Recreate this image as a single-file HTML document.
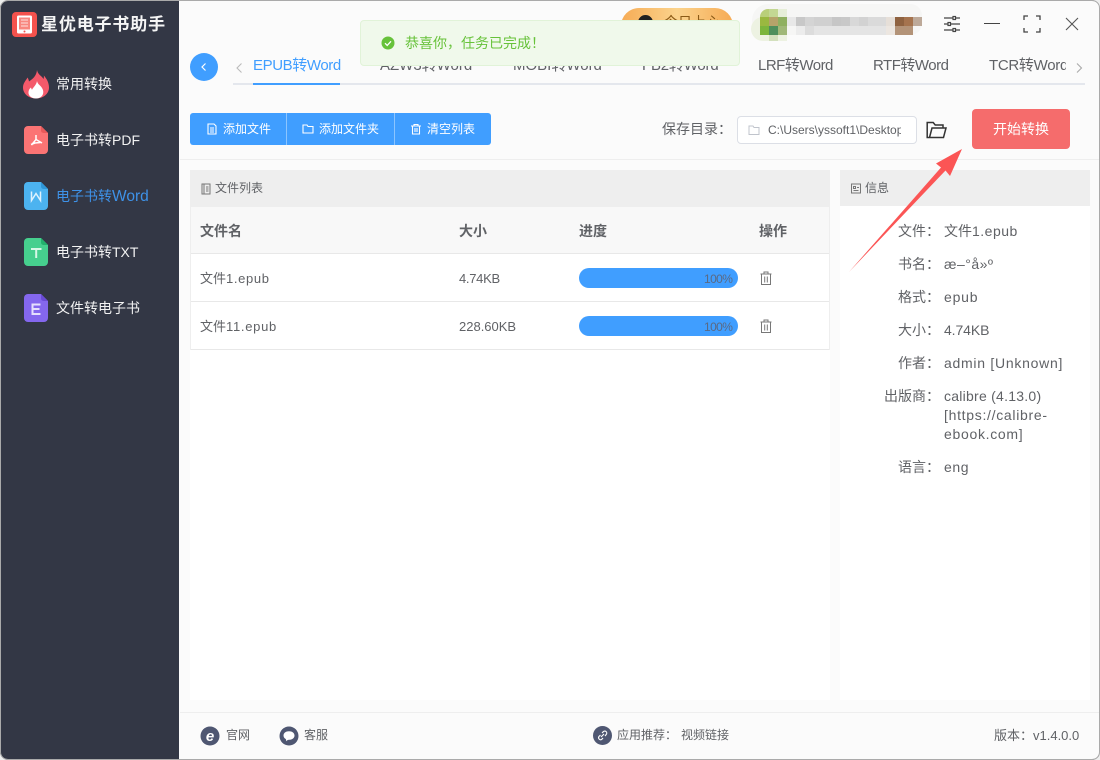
<!DOCTYPE html>
<html lang="zh-CN">
<head>
<meta charset="utf-8">
<title>星优电子书助手</title>
<style>
*{box-sizing:border-box;margin:0;padding:0}
html,body{width:1100px;height:760px;overflow:hidden;background:#eeeeee}
body{position:relative;font-family:"Liberation Sans","Noto Sans CJK SC",sans-serif;color:#606266}
#win{position:absolute;left:0;top:0;width:1100px;height:760px;background:#fbfbfb;border-radius:8px;overflow:hidden;border-top:1px solid #b5b5b5;border-bottom:1px solid #8a8a8a}
#edge{position:absolute;left:0;top:0;width:1100px;height:760px;border:1px solid #aaaaaa;border-radius:8px}
.a{position:absolute;white-space:nowrap}
#side{position:absolute;left:0;top:-1px;width:179px;height:762px;background:#333745}
.nav{position:absolute;left:56px;font-size:14px;line-height:20px;color:#f2f2f2;white-space:nowrap}
.ic{position:absolute;left:24px;width:24px;height:28px}
.tab{position:absolute;top:55px;font-size:15px;line-height:20px;color:#606266;white-space:nowrap}
.btxt{position:absolute;top:120px;font-size:12px;line-height:17px;color:#fff}
.th{position:absolute;top:221px;font-size:14px;line-height:18px;font-weight:bold;color:#606266}
.td{position:absolute;font-size:13px;line-height:18px;color:#606266;white-space:nowrap}
.lb{position:absolute;width:60px;text-align:right;left:880px;font-size:14px;line-height:18px;color:#606266;white-space:nowrap}
.vl{position:absolute;left:944px;font-size:14px;line-height:18px;color:#606266;white-space:nowrap}
.ft{position:absolute;top:726px;font-size:12px;line-height:17px;color:#606266;white-space:nowrap}
.m{position:absolute;width:9px;height:9px}
.pct{position:absolute;left:704px;font-size:12px;line-height:16px;color:#5a6a85;letter-spacing:-.6px}
</style>
</head>
<body>
<div id="win">
  <!-- sidebar -->
  <div id="side"></div>
  <svg class="a" style="left:12px;top:11px" width="25" height="26" viewBox="0 0 25 26">
    <rect width="25" height="25" rx="4" fill="#f4524d"/>
    <rect x="5" y="3.500" width="15" height="18" rx="1.500" fill="#fff"/>
    <rect x="7" y="5.500" width="11" height="12" fill="#f8877f"/>
    <path d="M9 8h7M9 11h7M9 14h7" stroke="#fbd0cc" stroke-width="1.200"/>
    <circle cx="12.500" cy="19.500" r="1" fill="#f4524d"/>
  </svg>
  <div class="a" style="left:41px;top:13px;font-size:17px;line-height:22px;font-weight:bold;color:#f5f5f5;letter-spacing:.85px">星优电子书助手</div>

  <svg class="a" style="left:23px;top:69px" width="26" height="29" viewBox="0 0 26 29">
    <path d="M14 0c1 5 5 6 6.500 9 .5-1.500.5-2.500.3-3.500C23.500 8.500 26 12.500 26 17.500 26 24 20 28.500 13 28.500S0 24 0 17.500C0 13 3 10.500 4.500 7.500c.8 1.500 1.300 2.500 1.500 4C9.500 9 13.500 6 14 0z" fill="#f4596a"/>
    <path d="M14 11c.5 3 3 4 4.700 6.500 1.800 2.700 1.800 4.700 1.300 6.500-1 3-4 4.500-7 4.500s-6.500-1.500-7.300-4.500c-.6-2.500.3-5 2.300-6.500.3 1 .5 1.700 1 2.200C10 17.500 13.500 15 14 11z" fill="#fff"/>
  </svg>
  <div class="nav" style="top:73px">常用转换</div>

  <svg class="ic" style="top:125px" viewBox="0 0 24 28"><path d="M4 0h13l7 7v17a4 4 0 0 1-4 4H4a4 4 0 0 1-4-4V4a4 4 0 0 1 4-4z" fill="#fb7474"/><path d="M17 0l7 7h-4.500a2.500 2.500 0 0 1-2.500-2.500z" fill="#e85a5a"/><path d="M12 9v4.500M12 13.500L7.500 19M12 13.500l6 3.500M7 18.500l4-1.500 5.500-.5" stroke="#fff" stroke-width="1.500" fill="none"/></svg>
  <div class="nav" style="top:129px">电子书转PDF</div>

  <svg class="ic" style="top:181px" viewBox="0 0 24 28"><path d="M4 0h13l7 7v17a4 4 0 0 1-4 4H4a4 4 0 0 1-4-4V4a4 4 0 0 1 4-4z" fill="#4cb3f0"/><path d="M17 0l7 7h-4.500a2.500 2.500 0 0 1-2.500-2.500z" fill="#2f97d8"/><path d="M7.500 9.500v9l4.500-7 4.500 7v-9" stroke="#dff2fd" stroke-width="1.500" fill="none"/></svg>
  <div class="nav" style="top:185px;color:#3e92e8">电子书转<span style="font-size:15.5px">Word</span></div>

  <svg class="ic" style="top:237px" viewBox="0 0 24 28"><path d="M4 0h13l7 7v17a4 4 0 0 1-4 4H4a4 4 0 0 1-4-4V4a4 4 0 0 1 4-4z" fill="#46cf8e"/><path d="M17 0l7 7h-4.500a2.500 2.500 0 0 1-2.500-2.500z" fill="#22b06c"/><path d="M7 11h10.500M12.200 11v9" stroke="#d8f7e7" stroke-width="2" fill="none"/></svg>
  <div class="nav" style="top:241px">电子书转TXT</div>

  <svg class="ic" style="top:293px" viewBox="0 0 24 28"><path d="M4 0h13l7 7v17a4 4 0 0 1-4 4H4a4 4 0 0 1-4-4V4a4 4 0 0 1 4-4z" fill="#8467ee"/><path d="M17 0l7 7h-4.500a2.500 2.500 0 0 1-2.500-2.500z" fill="#6a4bd6"/><path d="M16.500 10.500H8.500v9.500h8M8.500 15h7" stroke="#e6e0fd" stroke-width="2" fill="none"/></svg>
  <div class="nav" style="top:297px">文件转电子书</div>

  <!-- top promo + mosaic -->
  <div class="a" style="left:621px;top:7px;width:112px;height:40px;border-radius:18px;background:linear-gradient(90deg,#f6ab55,#fbd38c 50%,#f6ab55)"></div>
  <div class="a" style="left:638px;top:14px;width:15px;height:15px;border-radius:50%;background:#222"></div>
  <div class="a" style="left:664px;top:12px;font-size:14px;line-height:18px;color:#8a5a16">今日上心</div>

  <div class="a" style="left:752px;top:3px;width:170px;height:31px;border-radius:20px 14px 14px 18px;background:#f6f6f5"></div>
  <div class="a" style="left:751px;top:16px;width:36px;height:24px;background:#edf2e2;border-radius:12px 0 0 12px"></div>
  <div class="m" style="left:760px;top:8px;background:#b9cf7a;border-radius:8px 0 0 0"></div>
  <div class="m" style="left:769px;top:8px;background:#c3d793"></div>
  <div class="m" style="left:778px;top:8px;background:#e6eed8"></div>
  <div class="m" style="left:760px;top:16px;background:#9ab840"></div>
  <div class="m" style="left:769px;top:16px;background:#b5a36a"></div>
  <div class="m" style="left:778px;top:16px;background:#8fb060"></div>
  <div class="m" style="left:760px;top:25px;background:#7cb53c"></div>
  <div class="m" style="left:769px;top:25px;background:#4e8f5c"></div>
  <div class="m" style="left:778px;top:25px;background:#a0b878"></div>
  <div class="m" style="left:769px;top:34px;height:6px;background:#d3e0bd"></div>
  <div class="m" style="left:787px;top:16px;background:#e8e8e8"></div>
  <div class="m" style="left:796px;top:16px;background:#c8c8c8"></div>
  <div class="m" style="left:805px;top:16px;background:#d4d4d4"></div>
  <div class="m" style="left:814px;top:16px;width:18px;background:#d0d0d0"></div>
  <div class="m" style="left:832px;top:16px;background:#c6c6c6"></div>
  <div class="m" style="left:841px;top:16px;background:#c8c8c8"></div>
  <div class="m" style="left:850px;top:16px;background:#d8d8d8"></div>
  <div class="m" style="left:859px;top:16px;background:#d2d2d2"></div>
  <div class="m" style="left:868px;top:16px;width:18px;background:#dadada"></div>
  <div class="m" style="left:886px;top:16px;background:#e6dfd8"></div>
  <div class="m" style="left:895px;top:16px;background:#8f6240"></div>
  <div class="m" style="left:904px;top:16px;background:#a5734e"></div>
  <div class="m" style="left:913px;top:16px;background:#bda999"></div>
  <div class="m" style="left:796px;top:25px;width:9px;background:#ececec"></div>
  <div class="m" style="left:805px;top:25px;background:#dcdcdc"></div>
  <div class="m" style="left:814px;top:25px;width:72px;background:#e4e4e4"></div>
  <div class="m" style="left:886px;top:25px;background:#ece6e0"></div>
  <div class="m" style="left:895px;top:25px;width:18px;background:#b39378"></div>

  <!-- window controls -->
  <svg class="a" style="left:943px;top:14px" width="18" height="18" viewBox="0 0 18 18" fill="none" stroke="#444" stroke-width="1.200">
    <path d="M1 3h16M1 9h16M1 15h16"/><rect x="10" y="1.500" width="2.500" height="3" fill="#fbfbfb"/><rect x="5" y="7.500" width="2.500" height="3" fill="#fbfbfb"/><rect x="10" y="13.500" width="2.500" height="3" fill="#fbfbfb"/>
  </svg>
  <div class="a" style="left:984px;top:22px;width:16px;height:1px;background:#444"></div>
  <svg class="a" style="left:1023px;top:14px" width="18" height="18" viewBox="0 0 18 18" fill="none" stroke="#444" stroke-width="1.300"><path d="M1 5V1h4M13 1h4v4M17 13v4h-4M5 17H1v-4"/></svg>
  <svg class="a" style="left:1065px;top:16px" width="14" height="14" viewBox="0 0 14 14" fill="none" stroke="#555" stroke-width="1.100"><path d="M1 1l12 12M13 1L1 13"/></svg>

  <!-- tabs -->
  <div class="a" style="left:190px;top:52px;width:28px;height:28px;border-radius:50%;background:#409eff"></div>
  <svg class="a" style="left:199px;top:60px" width="10" height="12" viewBox="0 0 10 12" fill="none" stroke="#fff" stroke-width="1.200"><path d="M6.500 2.500L3 6l3.500 3.500"/></svg>
  <svg class="a" style="left:234px;top:60px" width="10" height="14" viewBox="0 0 10 14" fill="none" stroke="#bbb" stroke-width="1.100"><path d="M7.500 2.500L3 7l4.500 4.500"/></svg>
  <svg class="a" style="left:1074px;top:60px" width="10" height="14" viewBox="0 0 10 14" fill="none" stroke="#aaa" stroke-width="1.100"><path d="M3 2.500L7.500 7 3 11.500"/></svg>
  <div class="tab" style="left:253px;color:#409eff;letter-spacing:-.4px">EPUB转Word</div>
  <div class="tab" style="left:380px">AZW3转Word</div>
  <div class="tab" style="left:513px">MOBI转Word</div>
  <div class="tab" style="left:642px;letter-spacing:-.2px">FB2转Word</div>
  <div class="tab" style="left:758px;letter-spacing:-.5px">LRF转Word</div>
  <div class="tab" style="left:873px;letter-spacing:-.5px">RTF转Word</div>
  <div class="tab" style="left:989px;width:77px;overflow:hidden;letter-spacing:-.3px">TCR转Word</div>
  <div class="a" style="left:233px;top:82px;width:852px;height:2px;background:#e4e7ed"></div>
  <div class="a" style="left:253px;top:82px;width:87px;height:2px;background:#409eff"></div>

  <!-- toast -->
  <div class="a" style="left:360px;top:19px;width:380px;height:46px;background:#f0f9eb;border:1px solid #e1f3d8;border-radius:4px"></div>
  <svg class="a" style="left:381px;top:35px" width="14" height="14" viewBox="0 0 14 14"><circle cx="7" cy="7" r="6.500" fill="#67c23a"/><path d="M4 7.200l2.200 2.200L10 5.300" stroke="#fff" stroke-width="1.300" fill="none"/></svg>
  <div class="a" style="left:405px;top:33px;font-size:14px;line-height:18px;color:#67c23a">恭喜你，任务已完成！</div>

  <!-- toolbar -->
  <div class="a" style="left:190px;top:112px;width:301px;height:32px;background:#409eff;border-radius:3px"></div>
  <div class="a" style="left:286px;top:112px;width:1px;height:32px;background:#8cc5ff"></div>
  <div class="a" style="left:394px;top:112px;width:1px;height:32px;background:#8cc5ff"></div>
  <svg class="a" style="left:206px;top:122px" width="12" height="12" viewBox="0 0 12 12" fill="none" stroke="#fff" stroke-width="1.100"><path d="M2 1h6l2 2v8H2zM4 5h4M4 7h4M4 9h4"/></svg>
  <div class="btxt" style="left:223px">添加文件</div>
  <svg class="a" style="left:302px;top:122px" width="12" height="12" viewBox="0 0 12 12" fill="none" stroke="#fff" stroke-width="1.100"><path d="M1 2h4l1 1.500h5V10H1z"/></svg>
  <div class="btxt" style="left:319px">添加文件夹</div>
  <svg class="a" style="left:410px;top:122px" width="12" height="12" viewBox="0 0 12 12" fill="none" stroke="#fff" stroke-width="1.100"><path d="M1 3h10M4 3V1.500h4V3M2.500 3v8h7V3M5 5v4M7 5v4"/></svg>
  <div class="btxt" style="left:427px">清空列表</div>

  <div class="a" style="left:662px;top:119px;font-size:14px;line-height:18px;color:#606266">保存目录：</div>
  <div class="a" style="left:737px;top:115px;width:180px;height:28px;background:#fff;border:1px solid #dcdfe6;border-radius:4px"></div>
  <svg class="a" style="left:748px;top:123px" width="12" height="12" viewBox="0 0 12 12" fill="none" stroke="#c0c4cc" stroke-width="1"><path d="M1 2h4l1 1.500h5V10.500H1z"/></svg>
  <div class="a" style="left:768px;top:121px;width:133px;overflow:hidden;font-size:12px;line-height:17px;color:#606266">C:\Users\yssoft1\Desktop</div>
  <svg class="a" style="left:926px;top:120px" width="21" height="18" viewBox="0 0 21 18" fill="none" stroke="#333" stroke-width="1.500"><path d="M3.500 16.500H1.200V1.500h6l2 2.500H17v3M3.500 16.500L6 7h14l-2.500 9.500z"/></svg>
  <div class="a" style="left:972px;top:108px;width:98px;height:40px;background:#f56c6c;border-radius:4px;text-align:center;font-size:14px;line-height:40px;color:#fff">开始转换</div>
  <div class="a" style="left:180px;top:158px;width:920px;height:1px;background:#eeeeee"></div>

  <!-- file list -->
  <div class="a" style="left:190px;top:169px;width:640px;height:530px;background:#fff"></div>
  <div class="a" style="left:190px;top:169px;width:640px;height:37px;background:#eeeeee"></div>
  <svg class="a" style="left:201px;top:182px" width="10" height="12" viewBox="0 0 10 12" fill="none" stroke="#777" stroke-width="1"><path d="M1 1h8v10H1zM3 1v10M5 4h2.500M5 6h2.500M5 8h2.500"/></svg>
  <div class="a" style="left:215px;top:179px;font-size:12px;line-height:17px;color:#606266">文件列表</div>
  <div class="a" style="left:190px;top:206px;width:640px;height:47px;background:#f8f8f8;border-bottom:1px solid #e8e8e8"></div>
  <div class="th" style="left:200px">文件名</div>
  <div class="th" style="left:459px">大小</div>
  <div class="th" style="left:579px">进度</div>
  <div class="th" style="left:759px">操作</div>
  <div class="a" style="left:190px;top:300px;width:640px;height:1px;background:#e8e8e8"></div>
  <div class="a" style="left:190px;top:348px;width:640px;height:1px;background:#e8e8e8"></div>
  <div class="a" style="left:190px;top:206px;width:1px;height:143px;background:#eeeeee"></div>
  <div class="a" style="left:829px;top:206px;width:1px;height:143px;background:#eeeeee"></div>

  <div class="td" style="left:200px;top:269px">文件<span style="letter-spacing:.65px">1.epub</span></div>
  <div class="td" style="left:459px;top:269px;letter-spacing:-.3px">4.74KB</div>
  <div class="a" style="left:579px;top:267px;width:159px;height:20px;border-radius:10px;background:#409eff"></div>
  <div class="pct" style="top:270px">100%</div>
  <svg class="a" style="left:760px;top:270px" width="12" height="14" viewBox="0 0 12 14" fill="none" stroke="#777" stroke-width="1"><path d="M.5 3h11M4 3V1h4v2M1.500 3v10.500h9V3M4.700 5.500v6M7.300 5.500v6"/></svg>

  <div class="td" style="left:200px;top:317px">文件<span style="letter-spacing:.7px">11.epub</span></div>
  <div class="td" style="left:459px;top:317px">228.60KB</div>
  <div class="a" style="left:579px;top:315px;width:159px;height:20px;border-radius:10px;background:#409eff"></div>
  <div class="pct" style="top:318px">100%</div>
  <svg class="a" style="left:760px;top:318px" width="12" height="14" viewBox="0 0 12 14" fill="none" stroke="#777" stroke-width="1"><path d="M.5 3h11M4 3V1h4v2M1.500 3v10.500h9V3M4.700 5.500v6M7.300 5.500v6"/></svg>

  <!-- info panel -->
  <div class="a" style="left:840px;top:169px;width:250px;height:530px;background:#fff"></div>
  <div class="a" style="left:840px;top:169px;width:250px;height:36px;background:#eeeeee"></div>
  <svg class="a" style="left:851px;top:182px" width="10" height="11" viewBox="0 0 10 11" fill="none" stroke="#777" stroke-width="1"><path d="M.5 1h9v9h-9zM2.500 3.500h2v2h-2zM2.500 7.500h5M6 4.500h2"/></svg>
  <div class="a" style="left:865px;top:179px;font-size:12px;line-height:17px;color:#606266">信息</div>

  <div class="lb" style="top:221px">文件：</div><div class="vl" style="top:221px">文件<span style="letter-spacing:.5px">1.epub</span></div>
  <div class="lb" style="top:254px">书名：</div><div class="vl" style="top:254px;letter-spacing:.5px">æ–°å»º</div>
  <div class="lb" style="top:287px">格式：</div><div class="vl" style="top:287px;letter-spacing:.8px">epub</div>
  <div class="lb" style="top:320px">大小：</div><div class="vl" style="top:320px;letter-spacing:-.1px">4.74KB</div>
  <div class="lb" style="top:353px">作者：</div><div class="vl" style="top:353px;letter-spacing:.73px">admin [Unknown]</div>
  <div class="lb" style="top:386px">出版商：</div>
  <div class="vl" style="top:386px;letter-spacing:.25px">calibre (4.13.0)</div>
  <div class="vl" style="top:405px;letter-spacing:.7px">[https://calibre-</div>
  <div class="vl" style="top:424px;letter-spacing:.7px">ebook.com]</div>
  <div class="lb" style="top:457px">语言：</div><div class="vl" style="top:457px;letter-spacing:.6px">eng</div>

  <!-- footer -->
  <div class="a" style="left:180px;top:711px;width:920px;height:1px;background:#eeeeee"></div>
  <svg class="a" style="left:200px;top:725px" width="20" height="20" viewBox="0 0 20 20"><circle cx="10" cy="10" r="9.500" fill="#4f5772"/><text x="10" y="15" text-anchor="middle" font-size="15" font-weight="bold" font-style="italic" font-family="Liberation Sans" fill="#fff">e</text></svg>
  <div class="ft" style="left:226px">官网</div>
  <svg class="a" style="left:279px;top:725px" width="20" height="20" viewBox="0 0 20 20"><circle cx="10" cy="10" r="9.500" fill="#4f5772"/><path d="M4.500 9.500C4.500 6.800 7 5.200 10 5.200s5.500 1.600 5.500 4.300-2.400 4.300-5.500 4.300c-1 0-1.700.5-3 1.400.2-1.100.1-1.800-.5-2.300-1.200-.7-2-2-2-3.400z" fill="#fff"/></svg>
  <div class="ft" style="left:304px">客服</div>
  <svg class="a" style="left:593px;top:725px" width="19" height="19" viewBox="0 0 19 19"><circle cx="9.500" cy="9.500" r="9.500" fill="#4f5772"/><path d="M8 11l3-3M7.500 9L6 10.500a2 2 0 0 0 2.800 2.800L10 12M9 7l1.300-1.300a2 2 0 0 1 2.900 2.800L12 10" stroke="#fff" stroke-width="1.100" fill="none"/></svg>
  <div class="ft" style="left:617px">应用推荐：</div>
  <div class="ft" style="left:681px">视频链接</div>
  <div class="ft" style="left:994px;font-size:13px">版本：v1.4.0.0</div>
</div>
<div id="edge"></div>
<!-- red arrow, page coordinates -->
<svg class="a" style="left:0;top:0" width="1100" height="760" viewBox="0 0 1100 760">
  <path d="M849 272L941 167.500L936 163.500L962 149L950 176L945.500 170.500z" fill="#fb5555"/>
</svg>
</body>
</html>
